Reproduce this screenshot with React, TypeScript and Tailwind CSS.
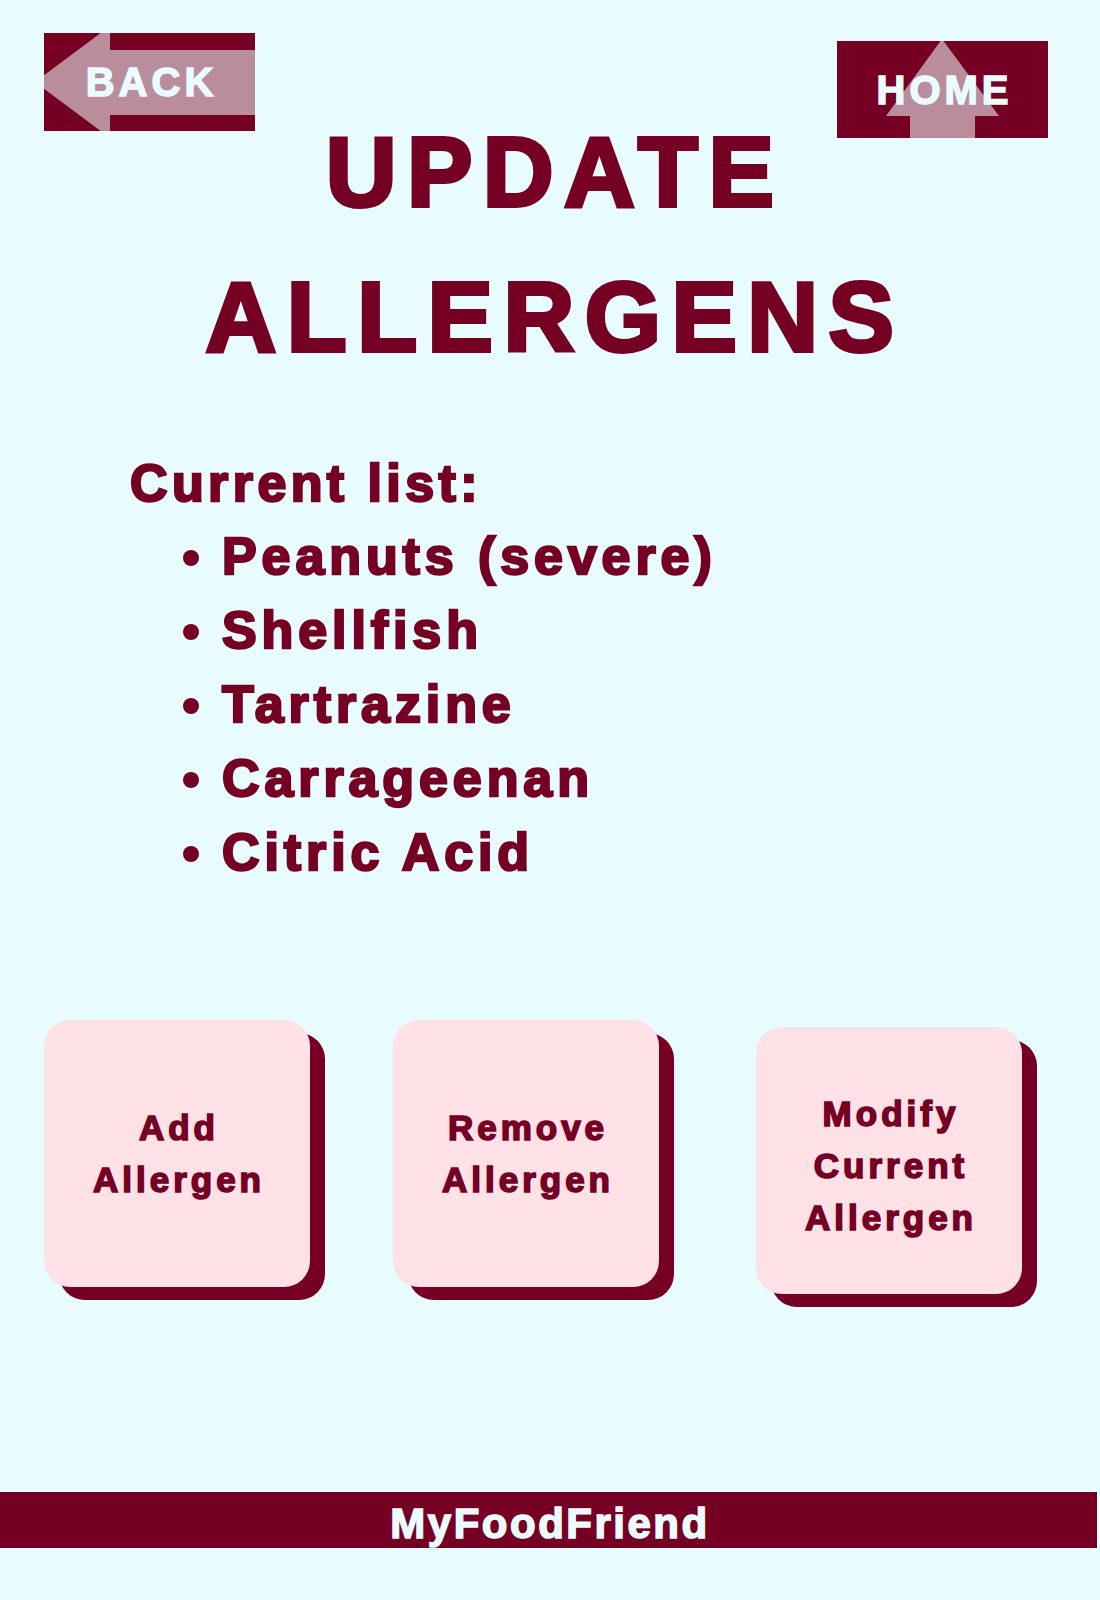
const allergens = ['Peanuts (severe)', 'Shellfish', 'Tartrazine', 'Carrageenan', 'Citric Acid'];

function BackButton() {
  return (
    <div className="relative w-[211px] h-[98px] ml-[44px] mt-[33px] bg-[#750023] overflow-hidden">
      <svg className="absolute inset-0" width="211" height="98" viewBox="0 0 211 98">
        <polygon points="-9,49 66,-7 66,17 211,17 211,82 66,82 66,105" fill="#b98d9c" />
      </svg>
      <span className="relative flex h-full items-center justify-center pl-[4px] text-[40px] leading-none font-bold tracking-[4px] text-[#eafcff] [-webkit-text-stroke-width:1.5px]">
        BACK
      </span>
    </div>
  );
}

function HomeButton() {
  return (
    <div className="relative w-[211px] h-[97px] mr-[52px] mt-[41px] bg-[#750023] overflow-hidden">
      <svg className="absolute inset-0" width="211" height="97" viewBox="0 0 211 97">
        <polygon points="105,-2 162,75 138,75 138,97 73,97 73,75 49,75" fill="#b98d9c" />
      </svg>
      <span className="relative flex h-full items-center justify-center pl-[4px] text-[40px] leading-none font-bold tracking-[4px] text-[#eafcff] [-webkit-text-stroke-width:1.5px]">
        HOME
      </span>
    </div>
  );
}

function ActionCard({ lines, className }: { lines: string[]; className: string }) {
  return (
    <div
      className={`w-[266px] h-[267px] rounded-[26px] bg-[#fde1e7] shadow-[15px_13px_0_0_#750023] flex flex-col items-center justify-center text-center ${className}`}
    >
      {lines.map((l) => (
        <span
          key={l}
          className="block pl-[4px] text-[35px] leading-[52px] font-bold tracking-[4px] text-[#750023] [-webkit-text-stroke-width:1.6px]"
        >
          {l}
        </span>
      ))}
    </div>
  );
}

export default function App() {
  return (
    <div className="w-[1100px] h-[1600px] bg-[#e8fcff] font-['Liberation_Sans',Arial,sans-serif] flex flex-col overflow-hidden">
      <header className="flex justify-between items-start h-[138px]">
        <BackButton />
        <HomeButton />
      </header>

      <h1 className="-mt-[38px] pl-[10px] text-center text-[98px] leading-[145px] font-bold tracking-[10.5px] text-[#750023] [-webkit-text-stroke-width:4px]">
        UPDATE
        <br />
        ALLERGENS
      </h1>

      <section className="mt-[58px] pl-[130px] text-[#750023]">
        <p className="text-[52px] leading-[71px] font-bold tracking-[4.4px] [-webkit-text-stroke-width:2.4px]">Current list:</p>
        <ul className="pl-[53px]">
          {allergens.map((a) => (
            <li key={a} className="flex items-center h-[74px]">
              <span className="w-[16px] h-[16px] rounded-full bg-[#750023] mr-[23px] mt-[4px]" />
              <span className="text-[52px] leading-[74px] font-bold tracking-[4.9px] [-webkit-text-stroke-width:2.4px]">{a}</span>
            </li>
          ))}
        </ul>
      </section>

      <div className="flex items-start mt-[131px] pl-[44px]">
        <ActionCard lines={['Add', 'Allergen']} className="" />
        <ActionCard lines={['Remove', 'Allergen']} className="ml-[83px]" />
        <ActionCard lines={['Modify', 'Current', 'Allergen']} className="ml-[97px] mt-[7px] pt-[10px]" />
      </div>

      <footer className="mt-[198px] w-[1097px] h-[56px] bg-[#750023] pt-[9px] pl-[3px] text-center text-[42px] leading-[46px] font-bold tracking-[2.5px] text-[#eafcff] [-webkit-text-stroke-width:1.5px]">
        MyFoodFriend
      </footer>
    </div>
  );
}
